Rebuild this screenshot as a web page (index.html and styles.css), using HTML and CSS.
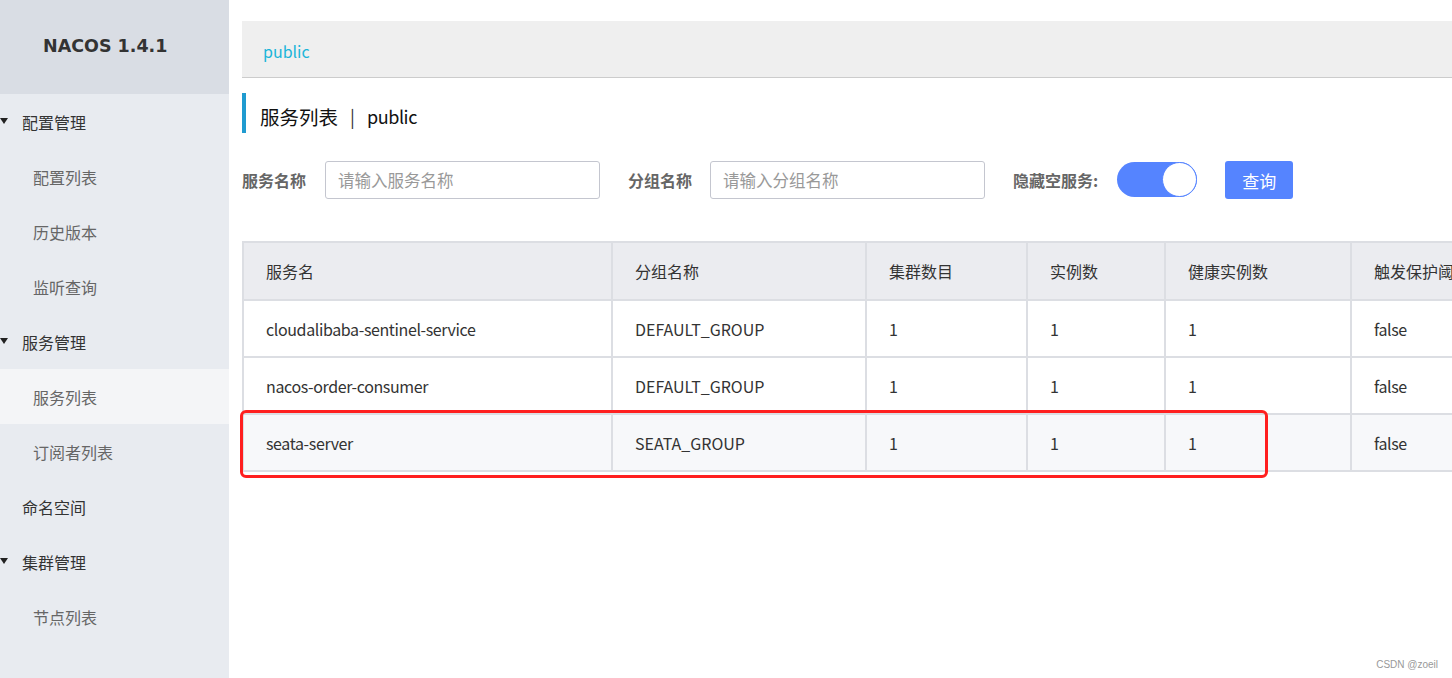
FILE: index.html
```html
<!DOCTYPE html>
<html lang="zh">
<head>
<meta charset="utf-8">
<title>Nacos</title>
<link rel="stylesheet" href="styles.css">
</head>
<body>
<div class="app">
  <aside class="sidebar">
    <div class="brand">NACOS 1.4.1</div>
    <ul class="menu">
      <li class="group"><span class="caret"></span>配置管理</li>
      <li class="item">配置列表</li>
      <li class="item">历史版本</li>
      <li class="item">监听查询</li>
      <li class="group"><span class="caret"></span>服务管理</li>
      <li class="item active">服务列表</li>
      <li class="item">订阅者列表</li>
      <li class="group plain">命名空间</li>
      <li class="group"><span class="caret"></span>集群管理</li>
      <li class="item">节点列表</li>
    </ul>
  </aside>
  <main class="main">
    <div class="crumb"><span class="ns">public</span></div>
    <h1 class="title">服务列表<span class="sep">|</span><span class="latin">public</span></h1>
    <div class="filters">
      <label class="flabel">服务名称</label>
      <div class="input"><span class="ph">请输入服务名称</span></div>
      <label class="flabel l2">分组名称</label>
      <div class="input"><span class="ph">请输入分组名称</span></div>
      <label class="flabel l3">隐藏空服务:</label>
      <div class="switch"><span class="knob"></span></div>
      <button class="btn">查询</button>
    </div>
    <div class="table-wrap">
      <table class="table">
        <colgroup>
          <col class="c1"><col class="c2"><col class="c3"><col class="c4"><col class="c5"><col class="c6">
        </colgroup>
        <thead>
          <tr><th>服务名</th><th>分组名称</th><th>集群数目</th><th>实例数</th><th>健康实例数</th><th>触发保护阈值</th></tr>
        </thead>
        <tbody>
          <tr><td class="lc">cloudalibaba-sentinel-service</td><td>DEFAULT_GROUP</td><td>1</td><td>1</td><td>1</td><td class="lc">false</td></tr>
          <tr><td class="lc">nacos-order-consumer</td><td>DEFAULT_GROUP</td><td>1</td><td>1</td><td>1</td><td class="lc">false</td></tr>
          <tr class="hover"><td class="lc">seata-server</td><td>SEATA_GROUP</td><td>1</td><td>1</td><td>1</td><td class="lc">false</td></tr>
        </tbody>
      </table>
      <div class="mark"></div>
    </div>
  </main>
  <div class="watermark">CSDN @zoeil</div>
</div>
</body>
</html>
```
FILE: styles.css
```css
* { box-sizing: border-box; }
html, body { margin: 0; padding: 0; }
body {
  width: 1452px;
  height: 678px;
  overflow: hidden;
  background: #fff;
  font-family: "Noto Sans CJK SC", "Open Sans", sans-serif;
  color: #333;
}
.app {
  display: flex;
  height: 678px;
  position: relative;
}
.sidebar {
  width: 229px;
  flex: none;
  background: #e8ebf0;
  height: 100%;
}
.brand {
  height: 94px;
  background: #d9dde4;
  display: flex;
  align-items: center;
  padding-left: 43px;
  font-family: "DejaVu Sans", "Noto Sans", sans-serif;
  font-weight: bold;
  font-size: 17.5px;
  color: #333;
  padding-bottom: 2px;
}
.menu {
  list-style: none;
  margin: 0;
  padding: 0;
}
.menu li {
  height: 55px;
  display: flex;
  align-items: center;
  font-size: 16px;
  line-height: 1;
}
.menu .group {
  color: #333;
  position: relative;
  padding-left: 22px;
}
.caret {
  position: absolute;
  left: 0;
  top: 24px;
  width: 0;
  height: 0;
  border-left: 4px solid transparent;
  border-right: 4px solid transparent;
  border-top: 6px solid #222;
}
.menu .item {
  padding-left: 33px;
  color: #666;
}
.menu .item.active {
  background: #f4f5f7;
}
.main {
  flex: 1;
  min-width: 0;
  padding: 21px 0 0 13px;
  overflow: hidden;
}
.crumb {
  height: 57px;
  background: #efefef;
  border-bottom: 1px solid #ccc;
  display: flex;
  align-items: center;
  padding-left: 21px;
  margin-right: -20px;
}
.ns {
  color: #1bb5d9;
  font-size: 16px;
  padding-top: 4px;
}
.title {
  margin: 15px 0 0 0;
  height: 40px;
  border-left: 4px solid #209bd0;
  padding-left: 14px;
  display: flex;
  align-items: center;
  font-size: 19.5px;
  font-weight: normal;
  color: #111;
  padding-top: 6px;
}
.title .latin { font-size: 18px; letter-spacing: -0.4px; }
.sep {
  margin: 0 12px 0 12px;
  color: #333;
  font-size: 18px;
}
.filters {
  display: flex;
  align-items: center;
  margin-top: 28px;
  height: 38px;
}
.flabel {
  font-size: 16px;
  font-weight: bold;
  color: #666;
  margin-right: 19px;
}
.flabel.l2 { margin-left: 28px; margin-right: 18px; }
.flabel.l3 { margin-left: 28px; margin-right: 19px; }
.input {
  width: 275px;
  height: 38px;
  border: 1px solid #c4c6cf;
  border-radius: 3px;
  display: flex;
  align-items: center;
  padding-left: 12px;
}
.ph {
  color: #999;
  font-size: 16.5px;
}
.switch {
  width: 80px;
  height: 35px;
  border-radius: 18px;
  background: #5584ff;
  position: relative;
  margin-right: 28px;
  margin-top: -2px;
}
.knob {
  position: absolute;
  right: 0;
  top: 0;
  width: 35px;
  height: 35px;
  border-radius: 50%;
  background: #fff;
  border: 1px solid #5584ff;
}
.btn {
  width: 68px;
  height: 38px;
  background: #5584ff;
  color: #fff;
  border: none;
  border-radius: 3px;
  font-family: inherit;
  font-size: 17px;
  padding: 0;
}
.table-wrap {
  position: relative;
  margin-top: 42px;
}
.table {
  border-collapse: collapse;
  table-layout: fixed;
  width: 1300px;
  border: 2px solid #dcdee3;
  font-size: 16px;
}
.c1 { width: 369px; }
.c2 { width: 254px; }
.c3 { width: 161px; }
.c4 { width: 138px; }
.c5 { width: 186px; }
.c6 { width: 192px; }
.table th, .table td {
  text-align: left;
  padding: 0 0 0 22px;
  border: 2px solid #dcdee3;
  white-space: nowrap;
  overflow: hidden;
  color: #333;
  font-weight: normal;
}
.table td.lc { letter-spacing: -0.38px; }
.table th {
  height: 58px;
  background: #ebecf0;
}
.table td {
  height: 57px;
  background: #fff;
}
.table tr.hover td { background: #f7f8fa; }
.mark {
  position: absolute;
  left: -2px;
  top: 169px;
  width: 1028px;
  height: 68px;
  border: 3px solid #ff1f1f;
  border-radius: 6px;
  pointer-events: none;
}
.watermark {
  position: absolute;
  right: 14px;
  bottom: 8px;
  font-family: "Liberation Sans", sans-serif;
  font-size: 10px;
  color: #999;
}
```
